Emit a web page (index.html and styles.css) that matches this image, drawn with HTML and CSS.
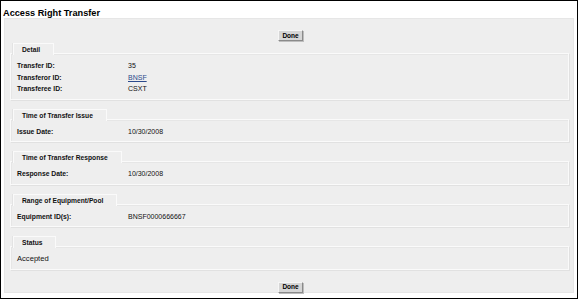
FILE: index.html
```html
<!DOCTYPE html>
<html>
<head>
<meta charset="utf-8">
<link rel="stylesheet" href="styles.css">
</head>
<body>
<div class="frame">
  <div class="title">Access Right Transfer</div>
  <div class="panel">
    <div class="btn-row"><button class="btn">Done</button></div>

    <div class="section first">
      <div class="tab">Detail</div>
      <div class="box">
        <div class="row"><span class="label">Transfer ID:</span><span class="value">35</span></div>
        <div class="row"><span class="label">Transferor ID:</span><span class="value"><a class="link" href="#">BNSF</a></span></div>
        <div class="row"><span class="label">Transferee ID:</span><span class="value">CSXT</span></div>
      </div>
    </div>

    <div class="section">
      <div class="tab">Time of Transfer Issue</div>
      <div class="box">
        <div class="row"><span class="label">Issue Date:</span><span class="value">10/30/2008</span></div>
      </div>
    </div>

    <div class="section">
      <div class="tab">Time of Transfer Response</div>
      <div class="box">
        <div class="row"><span class="label">Response Date:</span><span class="value">10/30/2008</span></div>
      </div>
    </div>

    <div class="section">
      <div class="tab">Range of Equipment/Pool</div>
      <div class="box">
        <div class="row"><span class="label">Equipment ID(s):</span><span class="value">BNSF0000666667</span></div>
      </div>
    </div>

    <div class="section">
      <div class="tab">Status</div>
      <div class="box">
        <div class="row"><span class="plain">Accepted</span></div>
      </div>
    </div>

    <div class="btn-row bottom"><button class="btn">Done</button></div>
  </div>
</div>
</body>
</html>
```

FILE: styles.css
```css
html, body {
  margin: 0;
  padding: 0;
  background: #ffffff;
}

.frame {
  box-sizing: border-box;
  width: 578px;
  height: 299px;
  border: 1px solid #000000;
  background: #ffffff;
  font-family: "Liberation Sans", Arial, sans-serif;
  font-size: 7px;
  color: #111111;
  overflow: hidden;
}

.title {
  padding: 7px 0 0 2px;
  height: 10px;
  line-height: 10px;
  font-size: 9.2px;
  font-weight: bold;
  color: #000000;
}

.panel {
  margin: 0 3px 0 3px;
  height: 275px;
  box-sizing: border-box;
  background: #eeeeee;
  border: 1px solid #e6e6e6;
  padding: 11px 4px 0 5px;
}

.btn-row {
  display: flex;
  justify-content: center;
  margin-left: 2px;
  height: 11px;
}

.btn-row.bottom {
  margin-top: 12px;
}

.btn {
  box-sizing: border-box;
  width: 25px;
  height: 11px;
  padding: 0;
  margin: 0;
  font-family: "Liberation Sans", Arial, sans-serif;
  font-size: 6.5px;
  font-weight: bold;
  line-height: 8px;
  color: #000000;
  background: #d6d6d6;
  border: 1px solid;
  border-color: #f6f6f6 #8a8a8a #8a8a8a #f6f6f6;
  box-shadow: 1px 1px 0 #bdbdbd;
}

.section {
  margin-top: 8.7px;
}

.section.first {
  margin-top: 2px;
}

.tab {
  display: block;
  width: max-content;
  position: relative;
  z-index: 1;
  margin-left: 3px;
  padding: 0 13px 0 8px;
  height: 11px;
  line-height: 11px;
  font-size: 6.7px;
  font-weight: bold;
  background: #eeeeee;
  border: 1px solid #fafafa;
  border-bottom: none;
  box-shadow: -1px 0 0 #e3e3e3;
}

.box {
  margin-top: -2px;
  border: 1px solid #fafafa;
  box-shadow: 1px 1px 0 #e1e1e1, inset 1px 1px 0 #e6e6e6;
  padding: 6px 6px 4px 6px;
}

.row {
  display: grid;
  grid-template-columns: 111px 1fr;
  height: 11.7px;
  line-height: 11.7px;
}

.label {
  font-size: 6.8px;
  font-weight: bold;
}

.value {
  font-size: 7px;
}

.plain {
  font-size: 7.6px;
  grid-column: 1 / 3;
}

.link {
  color: #2b4a8c;
  text-decoration: underline;
}
```
